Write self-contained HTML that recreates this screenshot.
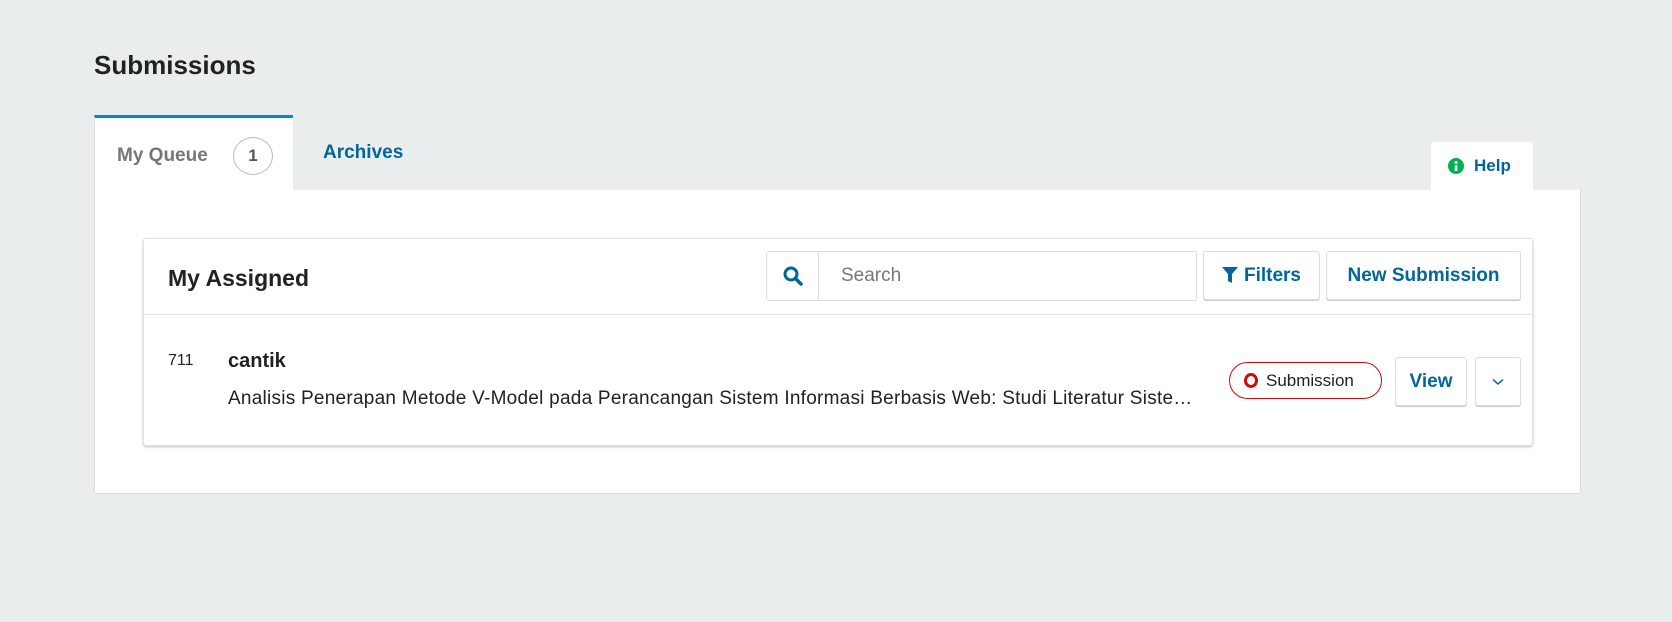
<!DOCTYPE html>
<html><head><meta charset="utf-8"><style>
*{box-sizing:border-box;margin:0;padding:0}
body{width:1672px;height:622px;background:#eaedee;font-family:"Liberation Sans",sans-serif;color:#222;position:relative;overflow:hidden}
.abs{position:absolute}
h1{position:absolute;left:94px;top:50px;font-size:26px;font-weight:bold;color:#222}
.tab{position:absolute;left:94px;top:115px;width:199px;height:76px;background:#fff;border-top:3px solid #008acb;border-left:1px solid #ddd}
.tab span{position:absolute;left:22px;top:27px;font-size:19px;font-weight:bold;color:#777}
.cnt{position:absolute;left:138px;top:19px;width:40px;height:38px;border:1px solid #bbb;border-radius:50%;text-align:center;line-height:36px;font-size:17px;font-weight:bold;color:#555}
.arch{left:323px;top:142px;font-size:19px;font-weight:bold;color:#006798}
.help{left:1431px;top:142px;width:102px;height:50px;background:#fff;border-radius:3px 3px 0 0}
.panel{left:94px;top:190px;width:1487px;height:304px;background:#fff;border:1px solid #ddd;border-top:none;border-radius:0 0 3px 3px}
.card{left:143px;top:238px;width:1390px;height:208px;background:#fff;border:1px solid #e4e4e4;border-radius:3px;box-shadow:0 1px 2px rgba(0,0,0,.25)}
.btn{position:absolute;background:#fff;border:1px solid #ddd;border-radius:3px;box-shadow:0 1px 0 #ccc;color:#006798;font-weight:bold;font-size:19px;text-align:center}
</style></head><body>
<h1>Submissions</h1>
<div class="tab"><span>My Queue</span><div class="cnt">1</div></div>
<div class="abs arch">Archives</div>
<div class="abs panel"></div>
<div class="abs help">
<svg class="abs" style="left:17px;top:16px" width="16" height="16" viewBox="0 0 16 16"><circle cx="8" cy="8" r="8" fill="#00b24e"/><rect x="6.8" y="7" width="2.6" height="6" fill="#fff"/><circle cx="8.1" cy="4.5" r="1.5" fill="#fff"/></svg>
<span class="abs" style="left:43px;top:14px;font-size:17px;font-weight:bold;color:#006798">Help</span></div>
<div class="abs card">
<div class="abs" style="left:24px;top:26px;font-size:23px;font-weight:bold">My Assigned</div>
<div class="abs" style="left:622px;top:12px;width:431px;height:50px;border:1px solid #ddd;border-radius:3px">
<div class="abs" style="left:0;top:0;width:52px;height:48px;border-right:1px solid #ddd"></div>
<svg class="abs" style="left:16px;top:14px" width="20" height="20" viewBox="0 0 20 20"><circle cx="8" cy="8" r="6" fill="none" stroke="#006798" stroke-width="3"/><path d="M12.5 12.5L18 18" stroke="#006798" stroke-width="3.5" stroke-linecap="round"/></svg>
<span class="abs" style="left:74px;top:13px;font-size:19px;color:#777">Search</span></div>
<div class="btn" style="left:1059px;top:12px;width:117px;height:49px;line-height:47px"><svg style="vertical-align:-3px;margin-right:6px" width="16" height="18" viewBox="0 0 16 18"><path d="M0 1H16L10 8V17L6 15V8Z" fill="#006798"/></svg>Filters</div>
<div class="btn" style="left:1182px;top:12px;width:195px;height:49px;line-height:47px">New Submission</div>
<div class="abs" style="left:0;top:75px;width:100%;border-top:1px solid #e4e4e4"></div>
<div class="abs" style="left:24px;top:113px;font-size:16px">711</div>
<div class="abs" style="left:84px;top:111px;font-size:20px;font-weight:bold">cantik</div>
<div class="abs" style="left:84px;top:149px;width:966px;font-size:19px;letter-spacing:0.25px;white-space:nowrap;overflow:hidden;text-overflow:ellipsis">Analisis Penerapan Metode V-Model pada Perancangan Sistem Informasi Berbasis Web: Studi Literatur Sistematis</div>
<div class="abs" style="left:1085px;top:123px;width:153px;height:37px;border:1px solid #d00a0a;border-radius:19px">
<div class="abs" style="left:14px;top:10px;width:14px;height:15px;border:3px solid #d00a0a;border-radius:50%"></div>
<span class="abs" style="left:36px;top:8px;font-size:17px;color:#222">Submission</span></div>
<div class="btn" style="left:1251px;top:118px;width:72px;height:49px;line-height:47px">View</div>
<div class="btn" style="left:1331px;top:118px;width:46px;height:49px"><svg style="margin-top:20px" width="12" height="8" viewBox="0 0 12 8"><path d="M1 1.5L6 6L11 1.5" fill="none" stroke="#006798" stroke-width="1.5"/></svg></div>
</div>
</body></html>
